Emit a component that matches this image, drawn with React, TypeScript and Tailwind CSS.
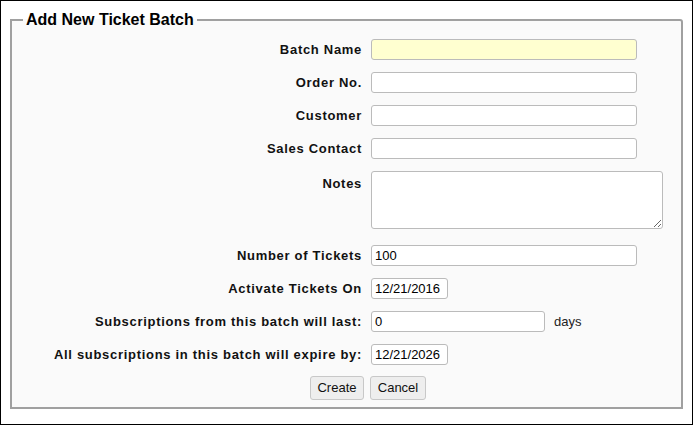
import React from 'react';

const label = "text-right text-[13px] font-bold tracking-[0.7px] text-[#111] leading-[15px]";
const input =
  "h-[21px] border border-[#bbb] rounded-[3px] px-[3px] text-[13px] text-black outline-none";

const Row = ({ name, children }: { name: string; children: React.ReactNode }) => (
  <>
    <div className={label}>{name}</div>
    <div className="flex items-center">{children}</div>
  </>
);

export default function App() {
  return (
    <div
      className="w-[693px] h-[425px] border border-black bg-white pl-[9px] pt-[10px]"
      style={{ fontFamily: '"Liberation Sans", Arial, sans-serif' }}
    >
      <fieldset className="w-[673px] h-[398px] border-2 border-[#a0a0a0] rounded-tr-[3px] bg-[#fafafa] px-0 pb-0">
        <legend className="ml-[11px] px-[3px] text-[16px] leading-[18px] font-bold text-black">
          Add New Ticket Batch
        </legend>
        <div className="mt-[10px] grid grid-cols-[350px_1fr] gap-x-[9px] gap-y-[12px] items-center">
          <Row name="Batch Name">
            <input className={`${input} w-[266px] bg-[#ffffd0]`} />
          </Row>
          <Row name="Order No.">
            <input className={`${input} w-[266px] bg-white`} />
          </Row>
          <Row name="Customer">
            <input className={`${input} w-[266px] bg-white`} />
          </Row>
          <Row name="Sales Contact">
            <input className={`${input} w-[266px] bg-white`} />
          </Row>
          <div className={`${label} self-start pt-[5px]`}>Notes</div>
          <div className="mb-[4px]">
            <textarea className="block w-[292px] h-[58px] border border-[#bbb] rounded-[3px] bg-white text-[13px] outline-none" />
          </div>
          <Row name="Number of Tickets">
            <input className={`${input} w-[266px] bg-white`} defaultValue="100" />
          </Row>
          <Row name="Activate Tickets On">
            <input className={`${input} w-[77px] bg-white`} defaultValue="12/21/2016" />
          </Row>
          <Row name="Subscriptions from this batch will last:">
            <input className={`${input} w-[174px] bg-white`} defaultValue="0" />
            <span className="ml-[9px] text-[13px] text-[#222]">days</span>
          </Row>
          <Row name="All subscriptions in this batch will expire by:">
            <input className={`${input} w-[77px] bg-white`} defaultValue="12/21/2026" />
          </Row>
          <div className="col-span-2 -mt-[1px] flex gap-[6px] pl-[298px]">
            <button className="h-[24px] w-[54px] border border-[#c8c8c8] rounded-[3px] bg-[#eeeeee] text-[13px] text-[#111]">
              Create
            </button>
            <button className="h-[24px] w-[56px] border border-[#c8c8c8] rounded-[3px] bg-[#eeeeee] text-[13px] text-[#111]">
              Cancel
            </button>
          </div>
        </div>
      </fieldset>
    </div>
  );
}
